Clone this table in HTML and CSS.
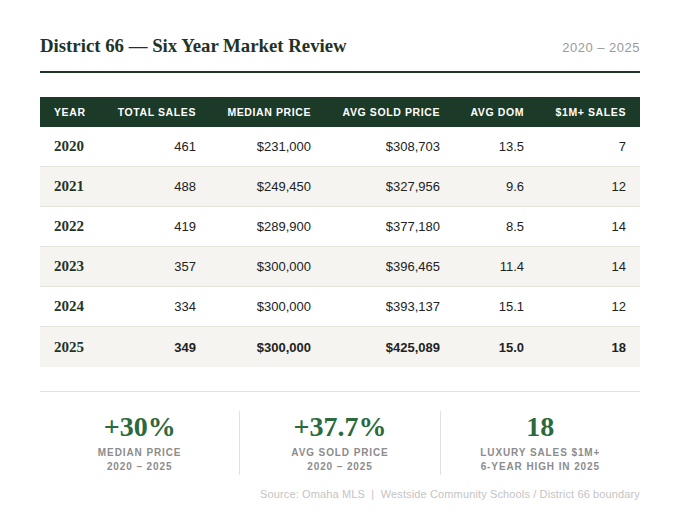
FILE: index.html
```html
<!DOCTYPE html>
<html>
<head>
<meta charset="utf-8">
<link rel="stylesheet" href="styles.css">
</head>
<body>
<div class="page">
  <header class="head">
    <h1 class="title">District 66 — Six Year Market Review</h1>
    <span class="range">2020 – 2025</span>
  </header>
  <table class="data">
    <colgroup>
      <col class="c1"><col class="c2"><col class="c3"><col class="c4"><col class="c5"><col class="c6">
    </colgroup>
    <thead>
      <tr><th class="l">Year</th><th>Total Sales</th><th>Median Price</th><th>Avg Sold Price</th><th>Avg DOM</th><th>$1M+ Sales</th></tr>
    </thead>
    <tbody>
      <tr><td class="yr">2020</td><td>461</td><td>$231,000</td><td>$308,703</td><td>13.5</td><td>7</td></tr>
      <tr class="alt"><td class="yr">2021</td><td>488</td><td>$249,450</td><td>$327,956</td><td>9.6</td><td>12</td></tr>
      <tr><td class="yr">2022</td><td>419</td><td>$289,900</td><td>$377,180</td><td>8.5</td><td>14</td></tr>
      <tr class="alt"><td class="yr">2023</td><td>357</td><td>$300,000</td><td>$396,465</td><td>11.4</td><td>14</td></tr>
      <tr><td class="yr">2024</td><td>334</td><td>$300,000</td><td>$393,137</td><td>15.1</td><td>12</td></tr>
      <tr class="alt last"><td class="yr">2025</td><td>349</td><td>$300,000</td><td>$425,089</td><td>15.0</td><td>18</td></tr>
    </tbody>
  </table>
  <section class="stats">
    <div class="stat">
      <div class="num">+30%</div>
      <div class="lbl">Median Price<br>2020 – 2025</div>
    </div>
    <div class="stat">
      <div class="num">+37.7%</div>
      <div class="lbl">Avg Sold Price<br>2020 – 2025</div>
    </div>
    <div class="stat">
      <div class="num">18</div>
      <div class="lbl">Luxury Sales $1M+<br>6-Year High in 2025</div>
    </div>
  </section>
  <p class="source">Source: Omaha MLS &nbsp;|&nbsp; Westside Community Schools / District 66 boundary</p>
</div>
</body>
</html>
```
FILE: styles.css
```css
html, body {
  margin: 0;
  padding: 0;
  background: #ffffff;
}
.page {
  width: 600px;
  padding: 30px 40px 0;
  font-family: "Liberation Sans", Arial, sans-serif;
}
.head {
  display: flex;
  justify-content: space-between;
  align-items: baseline;
  padding-bottom: 9px;
  border-bottom: 2px solid #1f3326;
}
.title {
  margin: 0;
  font-family: "Liberation Serif", "Times New Roman", serif;
  font-size: 18.8px;
  font-weight: bold;
  color: #1f3326;
  line-height: 32px;
}
.range {
  font-size: 13px;
  color: #9a9a9a;
  letter-spacing: 0.5px;
}
.data {
  width: 600px;
  margin-top: 24px;
  border-collapse: collapse;
  table-layout: fixed;
}
.c1 { width: 60px; }
.c2 { width: 110px; }
.c3 { width: 115px; }
.c4 { width: 129px; }
.c5 { width: 84px; }
.c6 { width: 102px; }
.data th {
  background: #1c3a28;
  color: #ffffff;
  font-size: 10.5px;
  font-weight: bold;
  text-transform: uppercase;
  letter-spacing: 0.6px;
  height: 30px;
  padding: 0 14px;
  text-align: right;
  white-space: nowrap;
}
.data th.l { text-align: left; }
.data td {
  height: 39px;
  padding: 0 14px;
  font-size: 13px;
  color: #222222;
  text-align: right;
  border-bottom: 1px solid #e6e3dd;
}
.data td.yr {
  text-align: left;
  font-family: "Liberation Serif", "Times New Roman", serif;
  font-weight: bold;
  font-size: 15px;
  color: #1f3326;
}
.data tr.alt td { background: #f5f4f0; }
.data tr.last td {
  font-weight: bold;
  border-bottom: none;
  height: 40px;
}
.stats {
  display: flex;
  margin-top: 24px;
  border-top: 1px solid #e3e1dc;
  padding-top: 19px;
}
.stat {
  flex: 1;
  text-align: center;
  padding: 0 0 1px;
}
.stat + .stat { border-left: 1px solid #e3e1dc; }
.num {
  font-family: "Liberation Serif", "Times New Roman", serif;
  font-weight: bold;
  font-size: 28px;
  line-height: 32px;
  color: #2a6a3c;
}
.lbl {
  margin-top: 3px;
  font-size: 10px;
  font-weight: bold;
  letter-spacing: 0.9px;
  line-height: 14px;
  text-transform: uppercase;
  color: #8c8c8c;
}
.source {
  margin: 13px 0 0;
  text-align: right;
  font-size: 11px;
  letter-spacing: 0.13px;
  color: #c4c4c4;
}
```
